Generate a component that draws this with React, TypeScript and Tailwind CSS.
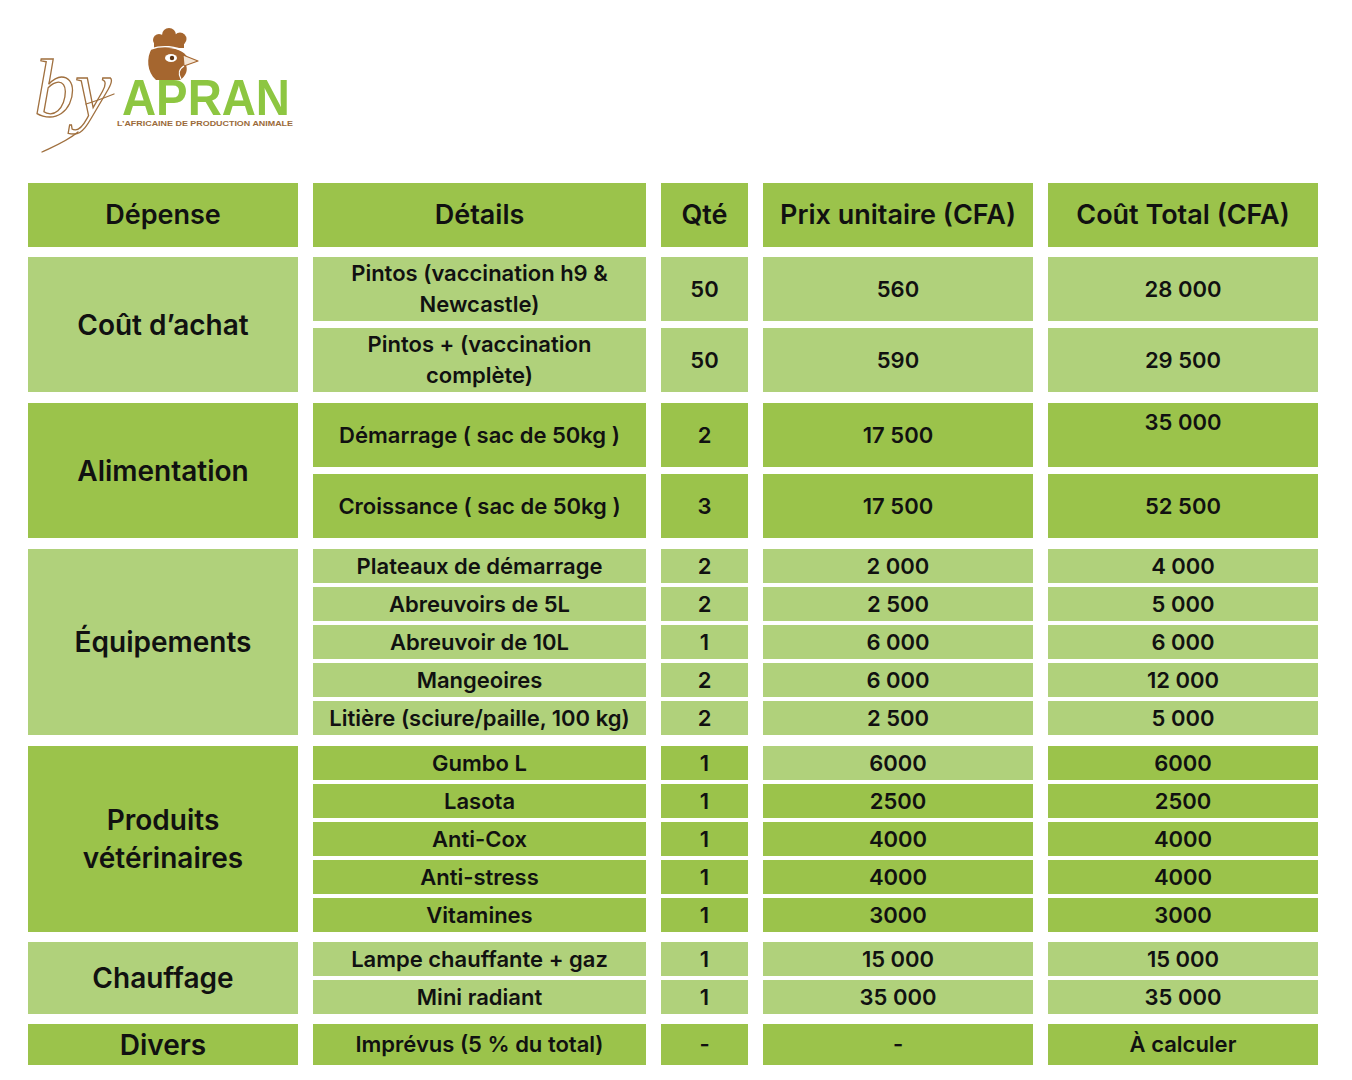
type Tone = "dark" | "light";

const TONES: Record<Tone, string> = {
  dark: "bg-[#9bc34b]",
  light: "bg-[#b0d17b]",
};

const COLS = ["w-[270px]", "w-[333px]", "w-[87px]", "w-[270px]", "w-[270px]"];

interface Row {
  detail: string;
  qty: string;
  prix: string;
  total: string;
  prixTone?: Tone;
  totalAlign?: string;
  wrap?: boolean;
}

interface Group {
  label: string;
  tone: Tone;
  rowHeight: string;
  rowGap: string;
  spacing: string;
  rows: Row[];
}

const groups: Group[] = [
  {
    label: "Coût d’achat",
    tone: "light",
    rowHeight: "h-[64px]",
    rowGap: "gap-[7px]",
    spacing: "mt-[10px]",
    rows: [
      { detail: "Pintos (vaccination h9 & Newcastle)", qty: "50", prix: "560", total: "28 000", wrap: true },
      { detail: "Pintos + (vaccination complète)", qty: "50", prix: "590", total: "29 500", wrap: true },
    ],
  },
  {
    label: "Alimentation",
    tone: "dark",
    rowHeight: "h-[64px]",
    rowGap: "gap-[7px]",
    spacing: "mt-[11px]",
    rows: [
      { detail: "Démarrage ( sac de 50kg )", qty: "2", prix: "17 500", total: "35 000", totalAlign: "items-start pt-[3px]" },
      { detail: "Croissance ( sac de 50kg )", qty: "3", prix: "17 500", total: "52 500" },
    ],
  },
  {
    label: "Équipements",
    tone: "light",
    rowHeight: "h-[34px]",
    rowGap: "gap-[4px]",
    spacing: "mt-[11px]",
    rows: [
      { detail: "Plateaux de démarrage", qty: "2", prix: "2 000", total: "4 000" },
      { detail: "Abreuvoirs de 5L", qty: "2", prix: "2 500", total: "5 000" },
      { detail: "Abreuvoir de 10L", qty: "1", prix: "6 000", total: "6 000" },
      { detail: "Mangeoires", qty: "2", prix: "6 000", total: "12 000" },
      { detail: "Litière (sciure/paille, 100 kg)", qty: "2", prix: "2 500", total: "5 000" },
    ],
  },
  {
    label: "Produits vétérinaires",
    tone: "dark",
    rowHeight: "h-[34px]",
    rowGap: "gap-[4px]",
    spacing: "mt-[11px]",
    rows: [
      { detail: "Gumbo L", qty: "1", prix: "6000", total: "6000", prixTone: "light" },
      { detail: "Lasota", qty: "1", prix: "2500", total: "2500" },
      { detail: "Anti-Cox", qty: "1", prix: "4000", total: "4000" },
      { detail: "Anti-stress", qty: "1", prix: "4000", total: "4000" },
      { detail: "Vitamines", qty: "1", prix: "3000", total: "3000" },
    ],
  },
  {
    label: "Chauffage",
    tone: "light",
    rowHeight: "h-[34px]",
    rowGap: "gap-[4px]",
    spacing: "mt-[10px]",
    rows: [
      { detail: "Lampe chauffante + gaz", qty: "1", prix: "15 000", total: "15 000" },
      { detail: "Mini radiant", qty: "1", prix: "35 000", total: "35 000" },
    ],
  },
  {
    label: "Divers",
    tone: "dark",
    rowHeight: "h-[41px]",
    rowGap: "gap-[4px]",
    spacing: "mt-[10px]",
    rows: [{ detail: "Imprévus (5 % du total)", qty: "-", prix: "-", total: "À calculer" }],
  },
];

function Cell({
  tone,
  className = "",
  children,
}: {
  tone: Tone;
  className?: string;
  children: React.ReactNode;
}) {
  return (
    <div className={`flex justify-center text-center ${TONES[tone]} ${className}`}>
      {children}
    </div>
  );
}

function Logo() {
  return (
    <svg width="290" height="145" viewBox="0 0 290 145" aria-label="by APRAN">
      {/* "by" signature */}
      <text
        x="14"
        y="96"
        fontFamily="'Liberation Serif', serif"
        fontStyle="italic"
        fontSize="82"
        fill="none"
        stroke="#a0703f"
        strokeWidth="1.3"
      >
        by
      </text>
      <path d="M66 84 C76 81 84 78 94 74" fill="none" stroke="#a0703f" strokeWidth="1.3" strokeLinecap="round" />
      <path d="M58 112 C46 122 30 128 22 132" fill="none" stroke="#a0703f" strokeWidth="1.3" strokeLinecap="round" />

      {/* chicken head */}
      <g>
        <circle cx="139" cy="20" r="6" fill="#a5662f" />
        <circle cx="149" cy="15" r="7" fill="#a5662f" />
        <circle cx="160" cy="19" r="6.5" fill="#a5662f" />
        <rect x="134" y="18" width="30" height="10" fill="#a5662f" />
        <path
          d="M132 28 C126 38 127 52 136 60 L160 60 C166 56 168 50 166 45 L168 38 C164 30 152 26 132 28 Z"
          fill="#a5662f"
        />
        <path d="M131 29 C142 25 156 26 166 32" fill="none" stroke="#fff" strokeWidth="1.4" />
        <ellipse cx="151" cy="38" rx="6" ry="4" fill="#fff" />
        <circle cx="152" cy="38" r="2.2" fill="#5a3312" />
        <path d="M163 35 L178 41 L164 46 Z" fill="#f4e6d6" stroke="#a5662f" strokeWidth="1.2" strokeLinejoin="round" />
        <path d="M164 46 C159 49 158 54 161 59" fill="none" stroke="#fff" strokeWidth="1.3" />
      </g>

      <text
        x="102"
        y="95"
        fontFamily="'Liberation Sans', Arial, sans-serif"
        fontWeight="700"
        fontSize="50"
        fill="#8dc641"
        textLength="168"
        lengthAdjust="spacingAndGlyphs"
      >
        APRAN
      </text>
      <text
        x="97"
        y="106"
        fontFamily="'Liberation Sans', Arial, sans-serif"
        fontWeight="700"
        fontSize="7"
        fill="#9a6a3a"
        textLength="176"
        lengthAdjust="spacingAndGlyphs"
      >
        L’AFRICAINE DE PRODUCTION ANIMALE
      </text>
    </svg>
  );
}

export default function App() {
  const headers = ["Dépense", "Détails", "Qté", "Prix unitaire (CFA)", "Coût Total (CFA)"];

  return (
    <div className="min-h-screen w-[1352px] bg-white font-['Inter','Noto_Sans',sans-serif] text-[#111]">
      <header className="h-[183px] pl-[20px] pt-[20px]">
        <Logo />
      </header>

      <main className="pl-[28px]">
        <div className="flex gap-[15px]">
          {headers.map((h, i) => (
            <Cell key={h} tone="dark" className={`${COLS[i]} h-[64px] items-center text-[27px] font-semibold`}>
              {h}
            </Cell>
          ))}
        </div>

        {groups.map((group) => (
          <section key={group.label} className={`flex gap-[15px] ${group.spacing}`}>
            <Cell
              tone={group.tone}
              className={`${COLS[0]} items-center px-6 text-[28px] leading-[38px] font-semibold`}
            >
              {group.label}
            </Cell>
            <div className={`flex flex-col ${group.rowGap}`}>
              {group.rows.map((row) => (
                <div key={row.detail} className="flex gap-[15px] text-[22px] font-semibold">
                  <Cell
                    tone={group.tone}
                    className={`${COLS[1]} ${group.rowHeight} items-center px-4 leading-[31px] ${row.wrap ? "" : "whitespace-nowrap"}`}
                  >
                    {row.detail}
                  </Cell>
                  <Cell tone={group.tone} className={`${COLS[2]} ${group.rowHeight} items-center`}>
                    {row.qty}
                  </Cell>
                  <Cell tone={row.prixTone ?? group.tone} className={`${COLS[3]} ${group.rowHeight} items-center`}>
                    {row.prix}
                  </Cell>
                  <Cell
                    tone={group.tone}
                    className={`${COLS[4]} ${group.rowHeight} ${row.totalAlign ?? "items-center"}`}
                  >
                    {row.total}
                  </Cell>
                </div>
              ))}
            </div>
          </section>
        ))}
      </main>
    </div>
  );
}
